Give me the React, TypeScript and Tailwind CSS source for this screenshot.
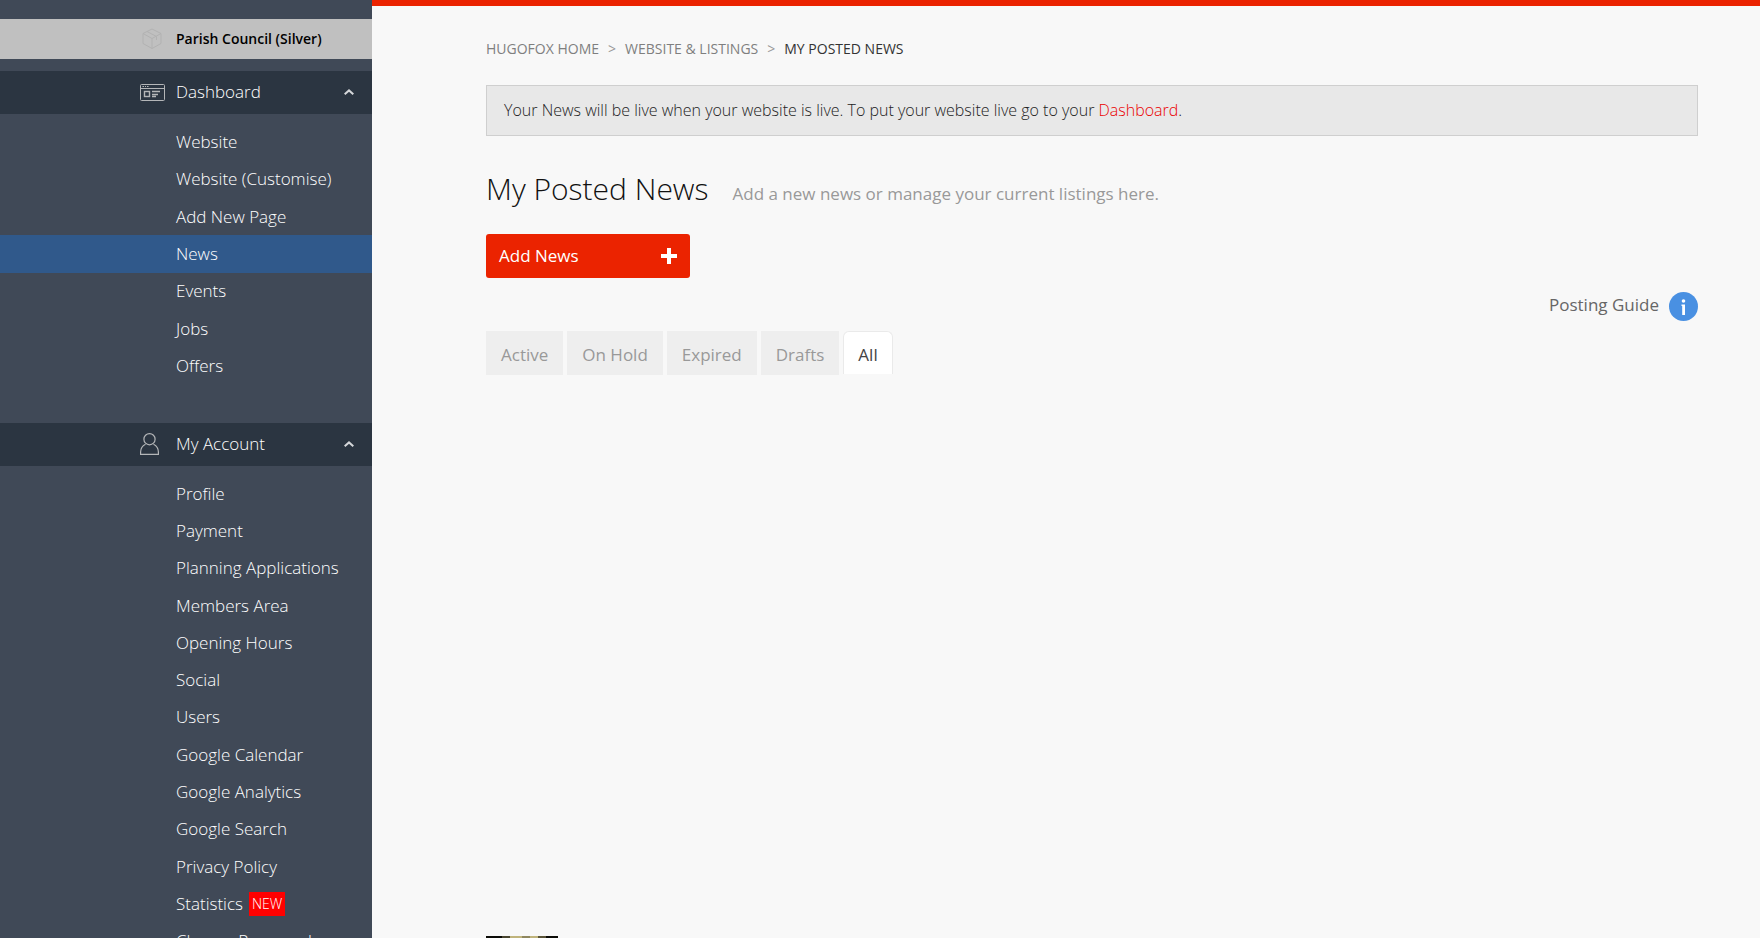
import { useState } from 'react';

const dashboardLinks = ['Website', 'Website (Customise)', 'Add New Page', 'News', 'Events', 'Jobs', 'Offers'];

const accountLinks = [
  'Profile', 'Payment', 'Planning Applications', 'Members Area', 'Opening Hours', 'Social', 'Users',
  'Google Calendar', 'Google Analytics', 'Google Search', 'Privacy Policy', 'Statistics', 'Change Password'
];

const tabs = ['Active', 'On Hold', 'Expired', 'Drafts', 'All'];

function CubeIcon() {
  return (
    <svg width="20" height="22" viewBox="0 0 20 22" fill="none" stroke="#b2b2b2" strokeLinejoin="round" aria-hidden="true">
      <path d="M10 1 19 5.5V15.5L10 20.5 1 15.5V5.5Z" />
      <path d="M1 5.5 10 10.5 19 5.5M10 10.5V20.5M5 3.5 14.5 8.5V12" />
    </svg>
  );
}

function DashboardIcon() {
  return (
    <svg width="25" height="17" viewBox="0 0 25 17" fill="none" stroke="#b4b6b8" aria-hidden="true">
      <rect x="0.5" y="0.5" width="24" height="16" rx="1" />
      <path d="M1 4.5H24" />
      <path d="M2.5 2.5H4M5 2.5H6M7 2.5H8.5" />
      <rect x="4.5" y="7.5" width="5" height="5" strokeWidth="1.4" />
      <path d="M12 7.5H20M12 10.5H18M12 12.5H16" strokeWidth="1.4" />
    </svg>
  );
}

function UserIcon() {
  return (
    <svg width="19" height="22" viewBox="0 0 19 22" fill="none" stroke="#b4b6b8" strokeWidth="1.2" aria-hidden="true">
      <circle cx="9.5" cy="6.2" r="5.6" />
      <path d="M5.5 11.2C2.5 12.7.6 15.5.6 19V21.4H18.4V19C18.4 15.5 16.5 12.7 13.5 11.2" />
    </svg>
  );
}

interface SectionProps {
  title: string;
  icon: React.ReactNode;
  links: string[];
  current?: string;
  listClass: string;
}

function SidebarSection({ title, icon, links, current, listClass }: SectionProps) {
  const [open, setOpen] = useState(true);

  return (
    <section>
      <button
        type="button"
        aria-expanded={open}
        onClick={() => setOpen(!open)}
        className="flex h-[43px] w-full items-center bg-[#2b3541] pr-[18px] pb-px text-left text-[17px] font-light text-white"
      >
        <span className="ml-[140px] w-9">{icon}</span>
        <span className="flex-1 pb-px">{title}</span>
        <svg width="10" height="6" viewBox="0 0 10 6" fill="none" stroke="#d5d7da" strokeWidth="2" aria-hidden="true">
          <path d="M.7 5.2 5 1.4 9.3 5.2" />
        </svg>
      </button>
      {open && (
        <ul className={`grid auto-rows-fr pt-[9px] ${listClass}`}>
          {links.map((link) => (
            <li key={link} className={link === current ? 'bg-[#30598b]' : ''}>
              <a
                href="#"
                aria-current={link === current ? 'page' : undefined}
                className="flex h-full items-center gap-1.5 pl-[176px] text-[17px] leading-5 font-light text-white"
              >
                {link}
                {link === 'Statistics' && (
                  <span className="bg-[#ff0000] px-[3px] py-0.5 text-sm leading-5">NEW</span>
                )}
              </a>
            </li>
          ))}
        </ul>
      )}
    </section>
  );
}

export default function App() {
  const [activeTab, setActiveTab] = useState('All');

  return (
    <div className="flex h-screen overflow-hidden bg-[#f8f8f8] font-['Open_Sans','Noto_Sans',sans-serif]">
      <aside className="w-[372px] shrink-0 overflow-hidden bg-[#404957] pt-[19px]">
        <div className="mb-3 flex h-10 items-center bg-[#c0c0c0] text-sm font-semibold text-black">
          <span className="ml-[142px] w-[34px]"><CubeIcon /></span>
          Parish Council (Silver)
        </div>
        <nav aria-label="Account">
          <SidebarSection title="Dashboard" icon={<DashboardIcon />} links={dashboardLinks} current="News" listClass="min-h-[271px] mb-[38px]" />
          <SidebarSection title="My Account" icon={<UserIcon />} links={accountLinks} listClass="min-h-[494px]" />
        </nav>
      </aside>

      <main className="min-w-0 flex-1 overflow-hidden border-t-[6px] border-[#eb2300] pr-[62px] pl-[114px]">
        <nav aria-label="Breadcrumb" className="mt-8 text-sm leading-[22px] text-[#7f7f7f]">
          <ol className="flex gap-[9px]">
            <li><a href="#">HUGOFOX HOME</a></li>
            <li aria-hidden="true" className="text-[#999]">&gt;</li>
            <li><a href="#">WEBSITE &amp; LISTINGS</a></li>
            <li aria-hidden="true" className="text-[#999]">&gt;</li>
            <li aria-current="page" className="text-[#333]">MY POSTED NEWS</li>
          </ol>
        </nav>

        <p className="mt-[25px] border border-[#cfcfcf] bg-[#e8e8e8] px-[17px] py-3 text-base leading-[25px] font-light text-[#222]">
          Your News will be live when your website is live. To put your website live go to your{' '}
          <a href="#" className="text-[#eb0000]">Dashboard</a>.
        </p>

        <header className="mt-8 flex items-baseline gap-6">
          <h1 className="text-[30px] leading-[42px] font-light text-[#111]">My Posted News</h1>
          <p className="text-[17px] text-[#999]">Add a new news or manage your current listings here.</p>
        </header>

        <button type="button" className="mt-6 flex h-11 w-[204px] items-center justify-between rounded-[3px] bg-[#eb2300] px-[13px] text-[17px] font-medium text-white">
          Add News
          <svg width="16" height="16" viewBox="0 0 16 16" fill="none" stroke="white" strokeWidth="4" aria-hidden="true">
            <path d="M8 0V16M0 8H16" />
          </svg>
        </button>

        <a href="#" className="mt-[14px] ml-auto flex w-fit items-center gap-[10px] text-[17px] leading-[26px] text-[#666]">
          <span className="pb-[3px]">Posting Guide</span>
          <svg width="29" height="29" viewBox="0 0 29 29" aria-hidden="true">
            <circle cx="14.5" cy="14.5" r="14.5" fill="#4990e2" />
            <circle cx="14.5" cy="9" r="1.8" fill="white" />
            <path d="M12.5 12.5H16V23H13.2V14H12.5Z" fill="white" />
          </svg>
        </a>

        <div role="tablist" aria-label="News status" className="mt-[10px] flex gap-1 text-[17px]">
          {tabs.map((tab) => (
            <button
              key={tab}
              type="button"
              role="tab"
              aria-selected={tab === activeTab}
              onClick={() => setActiveTab(tab)}
              className={
                tab === activeTab
                  ? 'h-[43px] rounded-t-md border border-b-0 border-[#eaeaea] bg-white px-[14px] pt-1 text-[#444]'
                  : 'h-11 bg-[#eee] px-[15px] pt-1 text-[#999]'
              }
            >
              {tab}
            </button>
          ))}
        </div>

        {/* Listing thumbnail */}
        <div className="mt-[561px] flex h-[72px] w-[72px] bg-[#0c0c08]">
          <span className="ml-4 w-2 bg-[#4a4630]" />
          <span className="w-3 bg-[#c0b47c]" />
          <span className="w-2 bg-[#8f875f]" />
          <span className="w-2 bg-[#c0b47c]" />
          <span className="w-2 bg-[#5a5438]" />
        </div>
      </main>
    </div>
  );
}
